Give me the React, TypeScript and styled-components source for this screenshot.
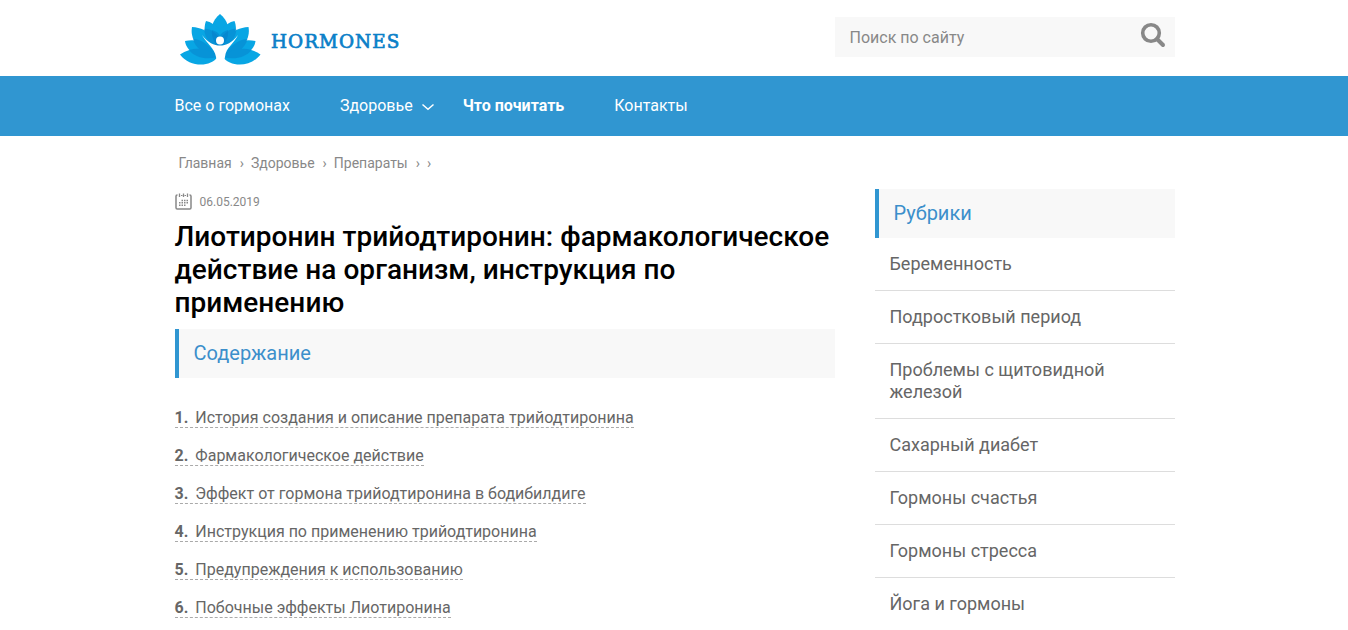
import React from "react";
import styled, { createGlobalStyle } from "styled-components";

const Global = createGlobalStyle`
  * { box-sizing: border-box; }
  html, body { margin: 0; background: #fff; height: 630px; overflow: hidden; }
  body { font-family: Roboto, "Liberation Sans", sans-serif; color: #666; }
  a { color: inherit; text-decoration: none; }
`;

const Container = styled.div`
  width: 1001px;
  margin: 0 auto;
  padding-left: 1px;
`;

const Header = styled(Container).attrs({ as: "header" })`
  height: 76px;
  display: flex;
  justify-content: space-between;
  align-items: flex-start;
`;

const Logo = styled.a`
  display: flex;
  padding: 13px 0 0 5.5px;
  svg { display: block; }
`;

const LogoText = styled.span`
  margin: 16px 0 0 9px;
  font: 18.4px/26px "DejaVu Serif", serif;
  letter-spacing: 1.05px;
  -webkit-text-stroke: 0.7px #0b80c8;
  color: #0b80c8;
`;

const Search = styled.form`
  width: 340px;
  height: 40px;
  margin-top: 17px;
  padding: 0 9px 0 15px;
  background: #f8f8f8;
  display: flex;
  justify-content: space-between;
  font-size: 16px;
  line-height: 41px;
  color: #888;
  svg { margin-top: 5px; }
`;

const NavBar = styled.nav`
  background: #3096d1;
  height: 60px;
`;

const NavList = styled(Container)`
  display: flex;
  font-size: 16px;
  line-height: 59px;
  color: #fff;
`;

const NavItem = styled.a<{ $gap: number; $bold?: boolean }>`
  display: flex;
  align-items: center;
  height: 58px;
  margin-right: ${(p) => p.$gap}px;
  font-weight: ${(p) => (p.$bold ? 700 : 400)};
  svg { margin: 4px 0 0 9px; }
`;

const Crumbs = styled.div`
  height: 53px;
  padding: 18px 0 0 4px;
  display: flex;
  font-size: 14px;
  line-height: 19px;
  color: #888;
  white-space: pre;
`;

const Arrow = styled.span<{ $right?: number }>`
  margin: 0 ${(p) => p.$right ?? 7}px 0 8px;
`;

const Columns = styled.div`
  display: flex;
  justify-content: space-between;
  align-items: flex-start;
`;

const Article = styled.main`
  width: 660px;
`;

const DateRow = styled.div`
  height: 31px;
  padding-top: 4px;
  display: flex;
  font-size: 12px;
  line-height: 18px;
  color: #888;
  svg { margin-right: 8px; }
`;

const Title = styled.h1`
  margin: 0 0 10px;
  font-size: 28px;
  line-height: 33px;
  letter-spacing: 0.02px;
  font-weight: 500;
  color: #000;
`;

const Heading = styled.div`
  height: 49px;
  padding-left: 15px;
  border-left: 4px solid #3096d1;
  background: #f8f8f8;
  font-size: 20px;
  line-height: 48px;
  color: #3c8fcb;
`;

const Toc = styled.ol`
  list-style: none;
  margin: 30px 0 0;
  padding: 0;
`;

const TocItem = styled.li`
  height: 38px;
  font-size: 16px;
  a {
    display: inline-block;
    height: 20px;
    line-height: 19px;
    border-bottom: 1px dashed #aaa;
  }
  b { margin-right: 7px; }
`;

const Sidebar = styled.aside`
  width: 300px;
`;

const Category = styled.a`
  display: block;
  padding: 15px 40px 15px 15px;
  border-bottom: 1px solid #ddd;
  font-size: 18px;
  line-height: 22px;
`;

const PetalHalf = () => (
  <>
    <g fill="#08a6e4">
      <path d="M36 16C33 24 34 34 48 44L50 24C45 20 41 17 36 16Z" />
      <path d="M22 22C20 33 26 45 47 52C48 35 40 23 22 22Z" />
      <path d="M15 36C16 45 26 54 47 53C44 40 30 33 15 36Z" />
      <path d="M10 49.5C22 41 39 42 47.5 52C41 62 20 63 10 49.500Z" />
    </g>
    <g fill="#0676c4" opacity=".38">
      <path d="M34 24C39 23 46 27 50 34V46C41 41 35 34 34 24Z" />
      <path d="M23 34C31 34 42 41 47 52C34 50 25 43 23 34Z" />
      <path d="M19 45C30 42 41 45 47.500 52C37 55 25 53 19 45Z" />
    </g>
  </>
);

const Lotus = () => (
  <svg width="82" height="52" viewBox="10 8 82 52">
    <path d="M50 9C42 15 40 25 43 33L50 44L57 33C60 25 58 15 50 9Z" fill="#08a6e4" />
    <PetalHalf />
    <g transform="matrix(-1 0 0 1 100.500 0)"><PetalHalf /></g>
    <path d="M42 25C46 26 49 28 50 31C51 28 54 26 58 25C59 32 55 39 50 43C45 39 41 32 42 25Z" fill="#0676c4" opacity=".4" />
    <path d="M32 30C38 38 44 40.500 50 40.500C56 40.500 62 38 68 30C64 39 56 42 55 52L53 60H47.500L46 52C44.500 43 37 39 32 30Z" fill="#fff" />
    <circle cx="50" cy="35.500" r="4" fill="#fff" />
  </svg>
);

const SearchIcon = () => (
  <svg width="26" height="26" viewBox="0 0 26 26" fill="none" stroke="#888">
    <circle cx="11" cy="11" r="8.300" strokeWidth="3.600" />
    <path d="M17 17L23 23" strokeWidth="4" strokeLinecap="round" />
  </svg>
);

const Chevron = () => (
  <svg width="13" height="8" viewBox="0 0 13 8" fill="none" stroke="#fff" strokeWidth="1.500">
    <path d="M0.500 1.500L6 6.300L11.500 1.500" />
  </svg>
);

const CalendarIcon = () => (
  <svg width="17" height="17" viewBox="0 0 17 17" fill="none" stroke="#888">
    <path d="M2.500 2H2.200Q1 2 1 3.200V14.800Q1 16 2.200 16H14.800Q16 16 16 14.800V3.200Q16 2 14.800 2H14.500" strokeWidth="1.500" />
    <path d="M6 2.500H7.500M9.500 2.500H11" strokeWidth="1.200" />
    <path d="M4.500 0.500V4M8.500 0.500V4M12.500 0.500V4" strokeWidth="1.300" />
    <path d="M6.500 7.500H13.500M4 9.800H13.500M4 12.200H11" strokeWidth="1.400" strokeDasharray="1.500 1" />
  </svg>
);

const toc = [
  "История создания и описание препарата трийодтиронина",
  "Фармакологическое действие",
  "Эффект от гормона трийодтиронина в бодибилдиге",
  "Инструкция по применению трийодтиронина",
  "Предупреждения к использованию",
  "Побочные эффекты Лиотиронина",
];

const categories = [
  "Беременность",
  "Подростковый период",
  "Проблемы с щитовидной железой",
  "Сахарный диабет",
  "Гормоны счастья",
  "Гормоны стресса",
  "Йога и гормоны",
];

export default function App() {
  return (
    <>
      <Global />
      <Header>
        <Logo href="#">
          <Lotus />
          <LogoText>HORMONES</LogoText>
        </Logo>
        <Search>
          <span>Поиск по сайту</span>
          <SearchIcon />
        </Search>
      </Header>
      <NavBar>
        <NavList>
          <NavItem href="#" $gap={50}>Все о гормонах</NavItem>
          <NavItem href="#" $gap={28}>Здоровье<Chevron /></NavItem>
          <NavItem href="#" $gap={50} $bold>Что почитать</NavItem>
          <NavItem href="#" $gap={0}>Контакты</NavItem>
        </NavList>
      </NavBar>
      <Container>
        <Crumbs>
          <a href="#">Главная</a><Arrow>›</Arrow>
          <a href="#">Здоровье</a><Arrow>›</Arrow>
          <a href="#">Препараты</a><Arrow $right={-1}>›</Arrow>
          <Arrow>›</Arrow>
        </Crumbs>
        <Columns>
          <Article>
            <DateRow><CalendarIcon />06.05.2019</DateRow>
            <Title>Лиотиронин трийодтиронин: фармакологическое действие на организм, инструкция по применению</Title>
            <Heading>Содержание</Heading>
            <Toc>
              {toc.map((text, i) => (
                <TocItem key={text}><a href="#"><b>{i + 1}.</b>{text}</a></TocItem>
              ))}
            </Toc>
          </Article>
          <Sidebar>
            <Heading>Рубрики</Heading>
            {categories.map((c) => <Category href="#" key={c}>{c}</Category>)}
          </Sidebar>
        </Columns>
      </Container>
    </>
  );
}
